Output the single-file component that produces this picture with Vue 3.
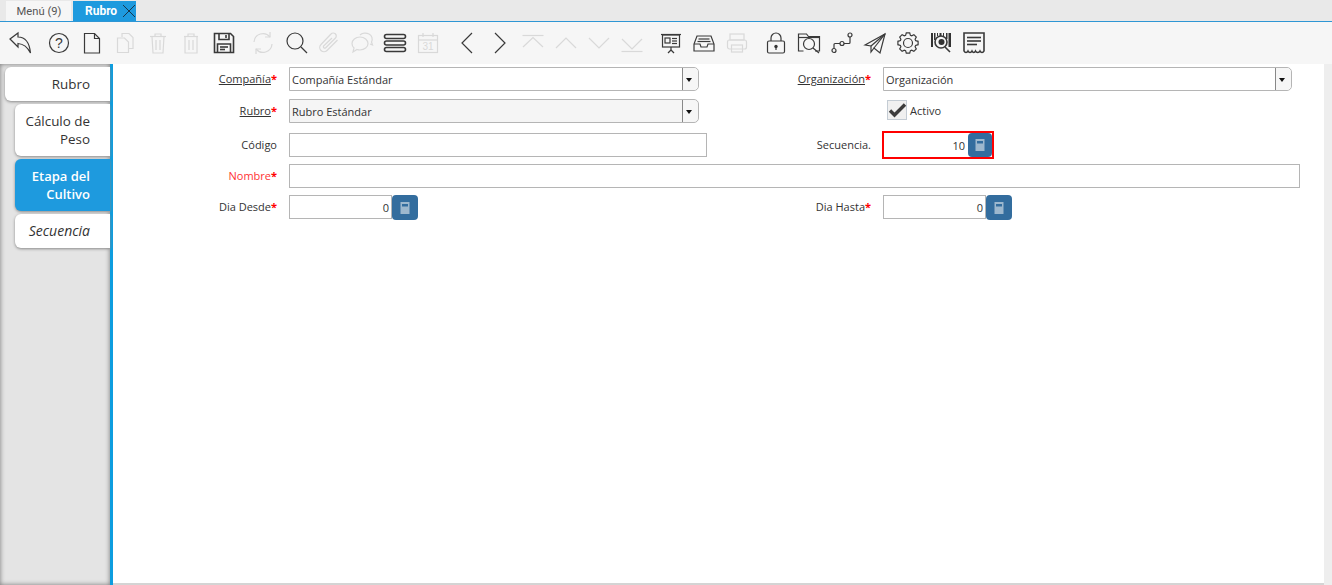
<script setup>
// contorno de engranaje para el icono de preferencias
const gearPath = () => {
  const pts = []
  for (let i = 0; i < 8; i++) {
    const a = (i * Math.PI) / 4
    for (const [off, r] of [[-0.3, 8], [-0.17, 10.2], [0.17, 10.2], [0.3, 8]]) {
      pts.push(`${(12 + r * Math.cos(a + off)).toFixed(1)} ${(12 + r * Math.sin(a + off)).toFixed(1)}`)
    }
  }
  return 'M' + pts.join('L') + 'Z'
}

const tools = [
  { name: 'back', w: 34, paths: ['M2 8 10 2v4c7 0 11.500 6 12.500 16-3-6-6.500-9-12.500-9.500V16Z'] },
  { name: 'help', gap: 6, circles: [[12, 12, 9.5]], label: '?', labelSize: 14, labelY: 17 },
  { name: 'new', paths: ['M4.500 2.500h10l5 5v14.500h-15Z', 'M14.500 2.500v5h5'] },
  { name: 'copy', off: true, paths: ['M9 6V2.500h7l4 4v11h-4', 'M4.500 7h7l4 4v10.500h-11Z'] },
  { name: 'delete', off: true, paths: ['M4 5.500h16', 'M9 5.500V3h6v2.500', 'M6 5.500 7 22h10l1-16.500', 'M10 9v10', 'M14 9v10'] },
  { name: 'deleteSel', off: true, paths: ['M5 5.500h14', 'M9 5.500V3h6v2.500', 'M6 5.500V22h12V5.500', 'M10 9v10', 'M14 9v10'] },
  { name: 'save', heavy: true, paths: ['M2.500 2.500h16l3 3v16h-19Z', 'M7 2.500v6h10v-6', 'M14 4v3', 'M5.500 21.500V13h13v8.500', 'M8 16h8', 'M8 18.500h5'] },
  { name: 'refresh', gap: 6, off: true, paths: ['M3 11a9 9 0 0 1 16-5', 'M21 13a9 9 0 0 1-16 5', 'M19 1v5h-5', 'M5 23v-5h5'] },
  { name: 'find', circles: [[11, 10, 8]], paths: ['M17 16l6 6'] },
  { name: 'attach', off: true, paths: ['M20.500 9 10 19.500a4 4 0 0 1-6-6L14 3a3 3 0 0 1 4.500 4L8.500 17a1.500 1.500 0 0 1-2-2L15 7'] },
  { name: 'chat', off: true, paths: ['M10 6c4.500 0 8 3 8 6.500S14.500 19 10 19c-1 0-2-.2-3-.5L3 21l1-4c-1.300-1.200-2-2.800-2-4.500C2 9 5.500 6 10 6Z', 'M10 4c2-2 6-2.500 9-1s4 5 2.500 8l1 3-2.500-1'] },
  { name: 'grid', rects: [[1.5, 3.5, 21, 4, 2], [1.5, 10, 21, 4, 2], [1.5, 16.5, 21, 4, 2]], heavy: true },
  { name: 'calendar', off: true, rects: [[2.5, 4.5, 19, 17, 0]], paths: ['M2.500 9h19', 'M7 2v4', 'M17 2v4'], label: '31', labelSize: 10, labelY: 19 },
  { name: 'prev', gap: 6, paths: ['M17 2 7 12l10 10'] },
  { name: 'next', paths: ['M7 2l10 10L7 22'] },
  { name: 'first', off: true, paths: ['M1.500 4.500h21', 'M2 16 12 6.500 22 16'] },
  { name: 'up', off: true, paths: ['M2 17 12 7l10 10'] },
  { name: 'down', off: true, paths: ['M2 7l10 10L22 7'] },
  { name: 'last', off: true, paths: ['M2 8l10 10L22 8', 'M1.500 20.500h21'] },
  { name: 'report', gap: 6, rects: [[3.5, 4, 17, 12, 0], [6, 7, 5, 5, 0]], paths: ['M2 3.500h20', 'M13 7.500h5', 'M13 10h5', 'M13 12.500h5', 'M12 16v3', 'M12 19l-3 3', 'M12 19l3 3'] },
  { name: 'archive', paths: ['M5 5h14l3 8v7H2v-7Z', 'M2 13h6l1 3h6l1-3h6', 'M6.500 8h11', 'M5.500 10.500h13'] },
  { name: 'print', off: true, rects: [[5, 3, 14, 6, 0], [2.5, 9, 19, 9, 2], [6.5, 14, 11, 7, 0]] },
  { name: 'lock', gap: 6, rects: [[3.5, 10, 17, 12, 1.5]], paths: ['M7 10V7a5 5 0 0 1 10 0v3', 'M12 15v4'], dots: [[12, 15.5, 1.7]] },
  { name: 'zoom', circles: [[12, 13, 5.5]], paths: ['M6.500 20h-5V3h8l2 2.500h11V20H18', 'M1.500 6.500h21', 'M16 17l6 5'] },
  { name: 'workflow', circles: [[4, 19.5, 2], [12, 12.500, 2], [20, 4, 2]], paths: ['M4 17.500v-4a1 1 0 0 1 1-1h5', 'M14 12.500h5a1 1 0 0 0 1-1V6'] },
  { name: 'send', paths: ['M2 14 22 3l-5 19-6-5-3 4v-6Z', 'M8 15 22 3', 'M11 17 22 3'] },
  { name: 'settings', paths: [gearPath()], circles: [[12, 12, 4.5]] },
  { name: 'barcode', heavy: true, bars: 'M2 2h2v14H2zM5 2h1.500v7H5zM8 2h1v3H8zM10.500 2h2v3h-2zM14 2h1v3h-1zM17 2h1.500v6H17zM19.500 2H22v14h-2.500z', circles: [[12, 11, 6]], paths: ['M16 16l5 5'], dots: [[12.5, 11, 3]] },
  { name: 'receipt', heavy: true, paths: ['M2 2h20v18c-1 2-3 2-4 0-1 2-3.500 2-4.500 0-1 2-2.500 2-3.500 0-1 2-3 2-4 0-1 2-3 2-4 0Z', 'M5 6.500h14', 'M5 10h14', 'M5 13.500h10'] }
]
</script>

<template>
  <div class="window">
    <div class="tabstrip">
      <div class="win-tab">Menú (9)</div>
      <div class="win-tab current">
        Rubro
        <svg class="close" viewBox="0 0 14 14" width="14" height="14">
          <path d="M1 1l12 12M13 1 1 13" />
        </svg>
      </div>
    </div>

    <div class="toolbar">
      <button
        v-for="t in tools"
        :key="t.name"
        type="button"
        class="tool"
        :class="{ off: t.off, heavy: t.heavy }"
        :style="{ width: (t.w || 33) + 'px', marginLeft: (t.gap || 0) + 'px' }"
      >
        <svg viewBox="0 0 24 24" width="24" height="24">
          <path v-if="t.bars" class="dot" :d="t.bars" />
          <path v-for="d in t.paths" :key="d" :d="d" />
          <circle v-for="c in t.circles" :key="c[0] + '-' + c[1]" class="ring" :cx="c[0]" :cy="c[1]" :r="c[2]" />
          <rect v-for="r in t.rects" :key="r[0] + '-' + r[1]" :x="r[0]" :y="r[1]" :width="r[2]" :height="r[3]" :rx="r[4]" />
          <circle v-for="c in t.dots" :key="'dot' + c[0]" class="dot" :cx="c[0]" :cy="c[1]" :r="c[2]" />
          <text v-if="t.label" class="glyph" x="12" :y="t.labelY" :font-size="t.labelSize" text-anchor="middle">{{ t.label }}</text>
        </svg>
      </button>
    </div>

    <div class="body">
      <aside class="sidebar">
        <div class="side-tab first">Rubro</div>
        <div class="side-tab">Cálculo de Peso</div>
        <div class="side-tab active">Etapa del Cultivo</div>
        <div class="side-tab sequence">Secuencia</div>
      </aside>

      <main class="content">
        <form class="form" @submit.prevent>
          <label class="lbl"><u>Compañía</u><span class="req">*</span></label>
          <div class="combo short">
            <span class="value">Compañía Estándar</span>
            <span class="arrow"></span>
          </div>
          <label class="lbl"><u>Organización</u><span class="req">*</span></label>
          <div class="combo right">
            <span class="value">Organización</span>
            <span class="arrow"></span>
          </div>

          <label class="lbl"><u>Rubro</u><span class="req">*</span></label>
          <div class="combo short readonly">
            <span class="value">Rubro Estándar</span>
            <span class="arrow"></span>
          </div>
          <span></span>
          <div class="check-field">
            <span class="checkbox">
              <svg viewBox="0 0 20 20" width="20" height="20"><path d="M3 10.500l4.500 4.500L18 4.500" /></svg>
            </span>
            <span class="check-text">Activo</span>
          </div>

          <label class="lbl">Código</label>
          <div class="text-input"></div>
          <label class="lbl">Secuencia.</label>
          <div class="number highlighted">
            <span class="num">10</span>
            <span class="calc">
              <svg viewBox="0 0 10 12" width="10" height="12"><path d="M.5 0h9v12h-9zM2 2v2.500h6V2z" fill-rule="evenodd" /></svg>
            </span>
          </div>

          <label class="lbl mandatory">Nombre<span class="req">*</span></label>
          <div class="text-input wide"></div>

          <label class="lbl">Dia Desde<span class="req">*</span></label>
          <div class="number">
            <span class="num">0</span>
            <span class="calc">
              <svg viewBox="0 0 10 12" width="10" height="12"><path d="M.5 0h9v12h-9zM2 2v2.500h6V2z" fill-rule="evenodd" /></svg>
            </span>
          </div>
          <label class="lbl">Dia Hasta<span class="req">*</span></label>
          <div class="number">
            <span class="num">0</span>
            <span class="calc">
              <svg viewBox="0 0 10 12" width="10" height="12"><path d="M.5 0h9v12h-9zM2 2v2.500h6V2z" fill-rule="evenodd" /></svg>
            </span>
          </div>
        </form>
      </main>

      <div class="scroll-track"></div>
    </div>
  </div>
</template>

<style>
html,
body {
  margin: 0;
  overflow: hidden;
}
</style>

<style scoped>
.window {
  display: flex;
  flex-direction: column;
  width: 1332px;
  height: 585px;
  background: #fff;
  color: #333;
  font-family: "Open Sans", "Noto Sans", sans-serif;
  font-size: 11px;
}

/* pestañas de ventana */
.tabstrip {
  display: flex;
  gap: 2px;
  flex: none;
  height: 20px;
  padding: 1px 0 0 6px;
  background: #e9e9e9;
  border-bottom: 1px solid #2f96d4;
}

.win-tab {
  display: flex;
  align-items: center;
  justify-content: center;
  width: 65px;
  padding-left: 1px;
  box-sizing: border-box;
  background: #f6f6f6;
  color: #555;
  font-family: Roboto, "Liberation Sans", sans-serif;
  font-size: 11.2px;
}

.win-tab.current {
  justify-content: flex-start;
  gap: 5px;
  width: 63px;
  padding-left: 12px;
  background: #1e9ade;
  color: #fff;
  font-size: 12px;
  font-weight: 700;
}

.close {
  flex: none;
  fill: none;
  stroke: #17374d;
  stroke-width: 1;
}

/* barra de herramientas */
.toolbar {
  display: flex;
  align-items: center;
  flex: none;
  height: 42px;
  padding-left: 2.5px;
  background: #f6f6f6;
}

.tool {
  display: flex;
  align-items: center;
  justify-content: center;
  flex: none;
  height: 42px;
  padding: 0;
  border: 0;
  background: none;
}

.tool svg {
  fill: none;
  stroke: #3a3a3a;
  stroke-width: 1.2;
}

.tool.heavy svg {
  stroke-width: 1.6;
}

.tool.off svg {
  stroke: #d9d9d9;
}

.tool .dot {
  fill: #333;
  stroke: none;
}

.tool .glyph {
  fill: #3a3a3a;
  stroke: none;
  font-family: "Liberation Sans", sans-serif;
}

.tool.off .glyph {
  fill: #d9d9d9;
}

.body {
  display: flex;
  flex: 1;
  min-height: 0;
}

/* pestañas laterales */
.sidebar {
  display: flex;
  flex-direction: column;
  align-items: flex-end;
  gap: 3px;
  flex: none;
  width: 110px;
  padding-top: 3px;
  background: #e4e4e4;
  border-right: 3px solid #0d9ddf;
  box-shadow: inset 0 0 5px #777;
}

.side-tab {
  width: 95px;
  padding: 8px 20px 8px 4px;
  box-sizing: border-box;
  background: #fff;
  border-radius: 6px 0 0 6px;
  box-shadow: 0 1px 3px #888;
  color: #333;
  font-size: 13.4px;
  line-height: 18px;
  text-align: right;
}

.side-tab.first {
  width: 105px;
}

.side-tab.active {
  background: #1e9ade;
  color: #fff;
  font-size: 13px;
  font-weight: 600;
}

.side-tab.sequence {
  font-size: 14px;
  font-style: italic;
}

/* formulario */
.content {
  flex: 1;
  min-width: 0;
  padding-top: 3px;
  box-sizing: border-box;
  border-bottom: 2px solid #d4d4d4;
}

.form {
  display: grid;
  grid-template-columns: 176px 418px 176px 417px;
  grid-template-rows: 32px 34px 31px 31px 24px;
  align-items: start;
}

.lbl {
  height: 24px;
  padding-right: 12px;
  color: #333;
  line-height: 23px;
  text-align: right;
}

.lbl u {
  color: #333;
}

.mandatory {
  color: #f33;
}

.req {
  color: #f00;
  font-weight: 700;
}

.combo {
  display: flex;
  align-items: stretch;
  height: 24px;
  box-sizing: border-box;
  border: 1px solid #b5b5b5;
  border-radius: 0 5px 5px 0;
  background: #fff;
}

.combo.short {
  width: 410px;
}

.combo.right {
  width: 409px;
}

.combo.readonly {
  background: #f5f5f5;
}

.value {
  flex: 1;
  padding-left: 2px;
  line-height: 24px;
}

.arrow {
  position: relative;
  width: 15px;
  border-left: 1px solid #888;
  border-radius: 0 5px 5px 0;
  background: #f6f6f6;
}

.arrow::after {
  content: "";
  position: absolute;
  top: 10px;
  left: 3px;
  border: 3px solid transparent;
  border-top: 4px solid #111;
  border-bottom-width: 0;
}

.check-field {
  display: flex;
  align-items: center;
  gap: 3px;
  height: 22px;
  padding-left: 4px;
  box-sizing: border-box;
}

.check-text {
  margin-top: 1px;
}

.checkbox {
  width: 20px;
  height: 20px;
  box-sizing: border-box;
  border: 1px solid #c4ccd4;
  background: #f0f0f0;
}

.checkbox svg {
  display: block;
  margin: -1px;
  fill: none;
  stroke: #3c3c3c;
  stroke-width: 3.4;
}

.text-input {
  width: 418px;
  height: 24px;
  box-sizing: border-box;
  border: 1px solid #b5b5b5;
  background: #fff;
}

.text-input.wide {
  grid-column: 2 / 5;
  width: 1011px;
}

.number {
  display: flex;
  width: 129px;
  height: 25px;
}

.num {
  width: 103px;
  height: 24px;
  padding-right: 2px;
  box-sizing: border-box;
  border: 1px solid #b5b5b5;
  background: #fff;
  line-height: 24px;
  text-align: right;
}

.calc {
  display: flex;
  align-items: center;
  justify-content: center;
  width: 26px;
  height: 25px;
  border-radius: 4px;
  background: #336d9e;
}

.calc svg {
  fill: #9db8ce;
}

.number.highlighted {
  width: 108px;
  height: 24px;
  margin-left: 1px;
  outline: 2px solid #f00;
}

.number.highlighted .num {
  width: 84px;
  border-color: transparent;
}

.number.highlighted .calc {
  width: 24px;
  height: 24px;
}

.scroll-track {
  flex: none;
  width: 8px;
  background: #eee;
}
</style>
